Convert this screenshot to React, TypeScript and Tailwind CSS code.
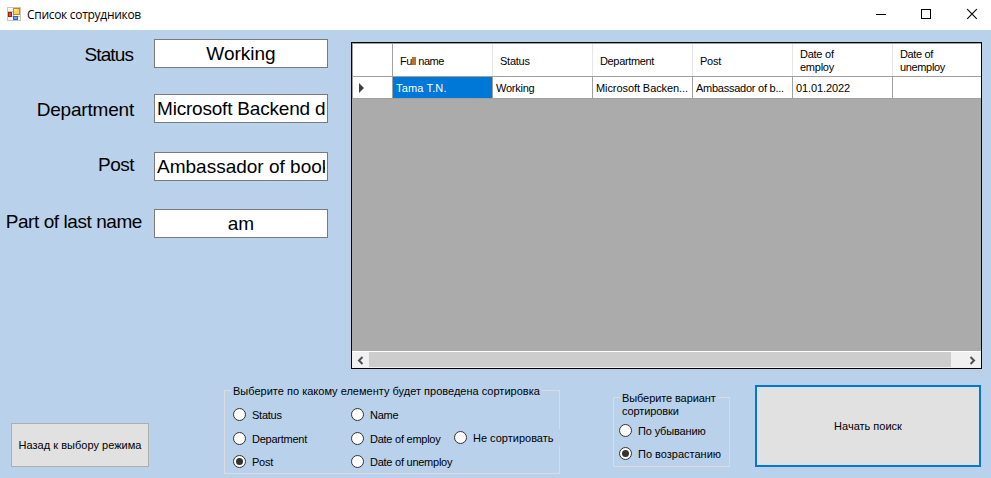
import type { ReactNode } from 'react';

const fields = [
  { label: 'Status', value: 'Working', row: 'mt-[9px]', labelCls: 'w-[133px] mr-[21px] pt-[2px] tracking-[-0.9px]', valueCls: 'text-center' },
  { label: 'Department', value: 'Microsoft Backend developer', row: 'mt-[26px]', labelCls: 'w-[134px] mr-[20px] pt-[2px] tracking-[-0.2px]', valueCls: 'tracking-[-0.2px]' },
  { label: 'Post', value: 'Ambassador of books', row: 'mt-[29px]', labelCls: 'w-[134px] mr-[20px] pb-[3px] tracking-[-0.5px]', valueCls: '' },
  { label: 'Part of last name', value: 'am', row: 'mt-[28px]', labelCls: 'w-[142px] mr-[12px] pb-[3px] tracking-[-0.43px]', valueCls: 'text-center' },
];

const columns = [
  { title: 'Full name', value: 'Tama T.N.', titleCls: 'tracking-[-0.5px]', valueCls: 'tracking-[0.15px]' },
  { title: 'Status', value: 'Working', titleCls: '', valueCls: '' },
  { title: 'Department', value: 'Microsoft Backen...', titleCls: 'tracking-[-0.35px]', valueCls: 'tracking-[-0.08px]' },
  { title: 'Post', value: 'Ambassador of b...', titleCls: '', valueCls: '' },
  { title: 'Date of\nemploy', value: '01.01.2022', titleCls: '', valueCls: 'tracking-[-0.1px]' },
  { title: 'Date of\nunemploy', value: '', titleCls: 'tracking-[-0.35px]', valueCls: '' },
];

function Radio({ children, checked = false, className = '' }: { children: ReactNode; checked?: boolean; className?: string }) {
  return (
    <div className={`flex h-[13px] items-center gap-[6px] whitespace-nowrap leading-[13px] ${className}`}>
      <span className="flex size-[13px] shrink-0 items-center justify-center rounded-full border border-[#333] bg-white">
        {checked && <span className="size-[7px] rounded-full bg-[#333]" />}
      </span>
      <span className="pt-[2px]">{children}</span>
    </div>
  );
}

function TitleBar() {
  return (
    <header className="flex h-[30px] items-center bg-white pl-[7px]">
      <svg className="mb-[2px]" width="14" height="14" viewBox="0 0 14 14" shapeRendering="crispEdges">
        <path d="M0.5 0.5h13v13h-13zM6.5 0.5v13M0.5 4.5h13M0.5 9.5h13" fill="#f8f8f8" stroke="#c4c4c4" />
        <rect x="6" y="1" width="7" height="7" fill="#c58b10" />
        <rect x="7" y="2" width="5" height="5" fill="#ffd24c" />
        <rect x="7" y="2" width="3" height="2" fill="#ffe99a" />
        <rect x="1" y="5" width="4" height="5" fill="#9c1c12" />
        <rect x="2" y="6" width="2" height="3" fill="#d94a38" />
        <rect x="6" y="9" width="5" height="4" fill="#2e62c9" />
        <rect x="7" y="10" width="3" height="2" fill="#76a6f3" />
      </svg>
      <h1 className="ml-[6px] font-['Open_Sans','Noto_Sans',sans-serif] text-[12px] leading-[16px] tracking-[-0.3px]">Список сотрудников</h1>
      <svg className="ml-auto" width="115" height="30" viewBox="876 0 115 30" fill="none" stroke="#000">
        <path d="M876 14.5h10M921.5 9.5h9v9h-9z" shapeRendering="crispEdges" />
        <path d="M967.2 9.2l9.6 9.6M976.8 9.2l-9.6 9.6" strokeWidth="1.1" />
      </svg>
    </header>
  );
}

function EmployeeGrid() {
  return (
    <div className="mt-[12px] flex h-[327px] w-[631px] flex-col border border-black bg-[#ababab]">
      <div className="flex h-[34px] border-b border-t border-[#a0a0a0] bg-white">
        <div className="w-[41px] shrink-0 border-x border-[#a0a0a0]" />
        {columns.map((c, i) => (
          <div key={c.title} className={`flex items-center whitespace-pre pl-[7px] pt-[2px] leading-[13px] ${c.titleCls} ${i < 5 ? 'w-[100px] border-r border-[#e5e5e5]' : 'w-[88px]'}`}>
            {c.title}
          </div>
        ))}
      </div>
      <div className="flex h-[22px] border-b border-[#a0a0a0] bg-white">
        <div className="flex w-[41px] shrink-0 items-center border-x border-[#a0a0a0] pl-[6px] pt-px">
          <svg width="5" height="10" viewBox="0 0 5 10"><path d="M0 0l5 5-5 5z" fill="#404040" /></svg>
        </div>
        {columns.map((c, i) => (
          <div
            key={c.title}
            className={`flex items-center whitespace-nowrap pl-[3px] pt-[2px] ${c.valueCls} ${i < 5 ? 'w-[100px] border-r border-[#a0a0a0]' : 'w-[88px]'} ${i === 0 ? 'bg-[#0078d7] text-white' : ''}`}
          >
            {c.value}
          </div>
        ))}
      </div>
      <div className="mt-auto flex h-[17px] items-center border-t border-white bg-[#f0f0f0]">
        <svg className="mr-px ml-[5px]" width="11" height="15" viewBox="0 0 11 15"><path d="M5.5 4L2 7.5 5.5 11" fill="none" stroke="#505050" strokeWidth="2" /></svg>
        <div className="mb-px h-[15px] w-[582px] bg-[#cdcdcd]" />
        <svg className="ml-[17px]" width="11" height="15" viewBox="0 0 11 15"><path d="M2.5 4L6 7.5 2.5 11" fill="none" stroke="#505050" strokeWidth="2" /></svg>
      </div>
    </div>
  );
}

export default function App() {
  return (
    <div className="h-[478px] w-[991px] overflow-hidden bg-[#b9d1ea] font-['Liberation_Sans',Arial,sans-serif] text-[11px] tracking-[-0.25px] text-black">
      <TitleBar />
      <main>
        <section className="flex h-[339px]">
          <div className="w-[351px] text-[19px] tracking-normal">
            {fields.map((f) => (
              <div key={f.label} className={`flex h-[29px] items-center ${f.row}`}>
                <label className={`whitespace-nowrap text-right leading-[22px] ${f.labelCls}`}>{f.label}</label>
                <div className="h-[29px] w-[174px] border border-[#7a7a7a] bg-white px-[2px]">
                  <div className={`overflow-hidden whitespace-nowrap leading-[27px] ${f.valueCls}`}>{f.value}</div>
                </div>
              </div>
            ))}
          </div>
          <EmployeeGrid />
        </section>
        <section className="flex items-start">
          <button className="ml-[11px] mt-[54px] h-[44px] w-[138px] whitespace-nowrap border border-[#adadad] bg-[#e1e1e1] tracking-[0.02px]">Назад к выбору режима</button>
          <div className="relative ml-[75px] mt-[21px] h-[84px] w-[336px] border border-[#dcdcdc] pl-[8px] pt-[17px]">
            <span className="absolute left-[6px] top-[-7px] whitespace-nowrap bg-[#b9d1ea] px-[2px] leading-[14px] tracking-[0.01px]">Выберите по какому елементу будет проведена сортировка</span>
            <span className="absolute right-[-1px] top-[38px] h-[17px] w-px bg-[#b9d1ea]" />
            <div className="flex">
              <div className="w-[118px]">
                <Radio>Status</Radio>
                <Radio className="mt-[11px]">Department</Radio>
                <Radio checked className="mt-[10px]">Post</Radio>
              </div>
              <div className="w-[103px]">
                <Radio>Name</Radio>
                <Radio className="mt-[11px]">Date of employ</Radio>
                <Radio className="mt-[10px]">Date of unemploy</Radio>
              </div>
              <Radio className="mt-[23px] tracking-normal">Не сортировать</Radio>
            </div>
          </div>
          <div className="relative ml-[53px] mt-[28px] h-[70px] w-[117px] border border-[#dcdcdc] pl-[5px] pt-[26px]">
            <span className="absolute left-[6px] top-[-6px] whitespace-nowrap bg-[#b9d1ea] px-[2px] leading-[13px] tracking-[-0.1px]">Выберите вариант<br />сортировки</span>
            <Radio className="tracking-[-0.15px]">По убыванию</Radio>
            <Radio checked className="mt-[10px] tracking-normal">По возрастанию</Radio>
          </div>
          <button className="ml-[25px] mt-[16px] h-[82px] w-[226px] border-2 border-[#0078d7] bg-[#e1e1e1] tracking-normal">Начать поиск</button>
        </section>
      </main>
    </div>
  );
}
